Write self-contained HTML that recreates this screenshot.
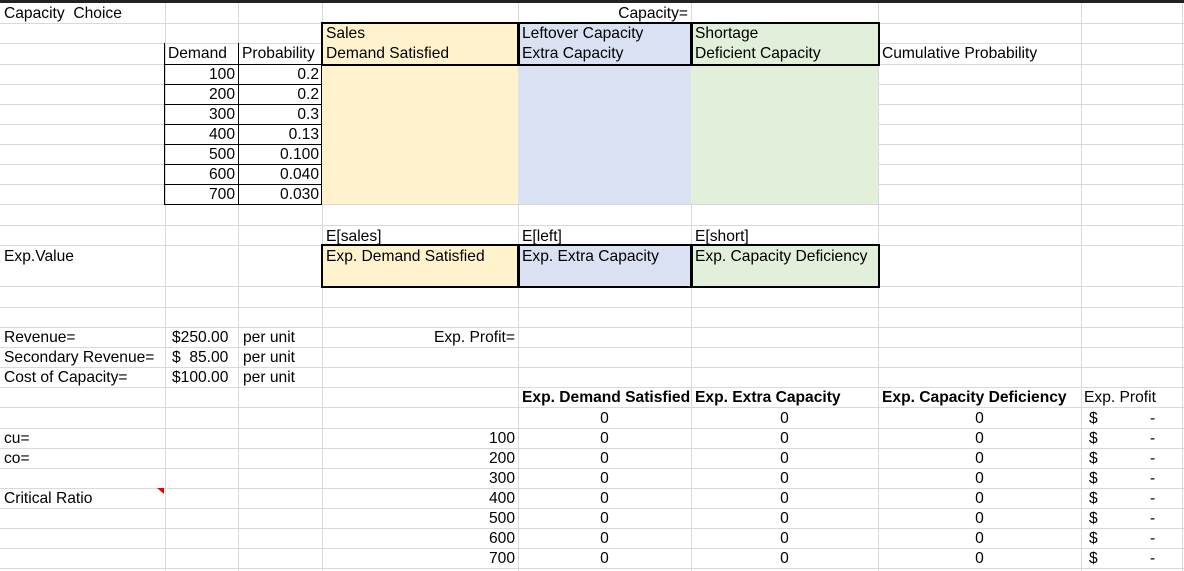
<!DOCTYPE html><html><head><style>
body{margin:0;width:1184px;height:571px;overflow:hidden;background:#fff;font-family:"Liberation Sans",Arial,sans-serif;font-size:15.6px;color:#000;position:relative}
.h{position:absolute;left:0;width:1184px;height:1px;background:#d9d9d9}
.v{position:absolute;top:0;height:571px;width:1px;background:#d9d9d9}
.f{position:absolute}
.t{position:absolute;height:20px;line-height:21px;white-space:nowrap;overflow:visible}
.r{text-align:right}.c{text-align:center}.b{font-weight:bold}
.bx{position:absolute;border:2px solid #000;box-sizing:border-box}
</style></head><body>
<div class="v" style="left:165px"></div><div class="v" style="left:238px"></div><div class="v" style="left:322px"></div><div class="v" style="left:518px"></div><div class="v" style="left:691px"></div><div class="v" style="left:878px"></div><div class="v" style="left:1081px"></div><div class="v" style="left:1182px"></div>
<div class="h" style="top:23px"></div><div class="h" style="top:43px"></div><div class="h" style="top:64px"></div><div class="h" style="top:84px"></div><div class="h" style="top:104px"></div><div class="h" style="top:124px"></div><div class="h" style="top:144px"></div><div class="h" style="top:164px"></div><div class="h" style="top:184px"></div><div class="h" style="top:204px"></div><div class="h" style="top:225px"></div><div class="h" style="top:245px"></div><div class="h" style="top:286px"></div><div class="h" style="top:307px"></div><div class="h" style="top:327px"></div><div class="h" style="top:347px"></div><div class="h" style="top:367px"></div><div class="h" style="top:387px"></div><div class="h" style="top:407px"></div><div class="h" style="top:428px"></div><div class="h" style="top:448px"></div><div class="h" style="top:468px"></div><div class="h" style="top:488px"></div><div class="h" style="top:508px"></div><div class="h" style="top:528px"></div><div class="h" style="top:548px"></div><div class="h" style="top:568px"></div>
<div class="f" style="left:0;top:0;width:1184px;height:3px;background:#222"></div>
<div class="f" style="left:322px;top:23px;width:196px;height:181px;background:#fff2cc"></div>
<div class="f" style="left:518px;top:23px;width:173px;height:181px;background:#d9e1f2"></div>
<div class="f" style="left:691px;top:23px;width:187px;height:181px;background:#e2efda"></div>
<div class="f" style="left:322px;top:245px;width:196px;height:41px;background:#fff2cc"></div>
<div class="f" style="left:518px;top:245px;width:173px;height:41px;background:#d9e1f2"></div>
<div class="f" style="left:691px;top:245px;width:187px;height:41px;background:#e2efda"></div>
<div class="bx" style="left:321px;top:22px;width:199px;height:44px"></div>
<div class="bx" style="left:517px;top:22px;width:176px;height:44px"></div>
<div class="bx" style="left:690px;top:22px;width:190px;height:44px"></div>
<div class="bx" style="left:321px;top:244px;width:199px;height:44px"></div>
<div class="bx" style="left:517px;top:244px;width:176px;height:44px"></div>
<div class="bx" style="left:690px;top:244px;width:190px;height:44px"></div>
<div class="f" style="left:164px;top:43px;width:1px;height:162px;background:#000"></div>
<div class="f" style="left:238px;top:43px;width:1px;height:162px;background:#000"></div>
<div class="f" style="left:164px;top:64px;width:158px;height:1px;background:#000"></div>
<div class="f" style="left:164px;top:84px;width:158px;height:1px;background:#000"></div>
<div class="f" style="left:164px;top:104px;width:158px;height:1px;background:#000"></div>
<div class="f" style="left:164px;top:124px;width:158px;height:1px;background:#000"></div>
<div class="f" style="left:164px;top:144px;width:158px;height:1px;background:#000"></div>
<div class="f" style="left:164px;top:164px;width:158px;height:1px;background:#000"></div>
<div class="f" style="left:164px;top:184px;width:158px;height:1px;background:#000"></div>
<div class="f" style="left:164px;top:204px;width:158px;height:1px;background:#000"></div>
<div class="f" style="left:321px;top:64px;width:1px;height:141px;background:#000"></div>
<div class="f" style="left:157px;top:488px;width:0;height:0;border-left:7px solid transparent;border-top:6px solid #e00"></div>
<div class="t" style="left:4px;top:3px">Capacity&nbsp; Choice</div>
<div class="t r" style="left:518px;top:3px;width:170px">Capacity=</div>
<div class="t" style="left:326px;top:23px">Sales</div>
<div class="t" style="left:522px;top:23px">Leftover Capacity</div>
<div class="t" style="left:695px;top:23px">Shortage</div>
<div class="t" style="left:168px;top:43px">Demand</div>
<div class="t" style="left:242px;top:43px">Probability</div>
<div class="t" style="left:326px;top:43px">Demand Satisfied</div>
<div class="t" style="left:522px;top:43px">Extra Capacity</div>
<div class="t" style="left:695px;top:43px">Deficient Capacity</div>
<div class="t" style="left:882px;top:43px">Cumulative Probability</div>
<div class="t r" style="left:165px;top:64px;width:70px">100</div><div class="t r" style="left:238px;top:64px;width:81px">0.2</div>
<div class="t r" style="left:165px;top:84px;width:70px">200</div><div class="t r" style="left:238px;top:84px;width:81px">0.2</div>
<div class="t r" style="left:165px;top:104px;width:70px">300</div><div class="t r" style="left:238px;top:104px;width:81px">0.3</div>
<div class="t r" style="left:165px;top:124px;width:70px">400</div><div class="t r" style="left:238px;top:124px;width:81px">0.13</div>
<div class="t r" style="left:165px;top:144px;width:70px">500</div><div class="t r" style="left:238px;top:144px;width:81px">0.100</div>
<div class="t r" style="left:165px;top:164px;width:70px">600</div><div class="t r" style="left:238px;top:164px;width:81px">0.040</div>
<div class="t r" style="left:165px;top:184px;width:70px">700</div><div class="t r" style="left:238px;top:184px;width:81px">0.030</div>
<div class="t" style="left:326px;top:226px">E[sales]</div>
<div class="t" style="left:522px;top:226px">E[left]</div>
<div class="t" style="left:695px;top:226px">E[short]</div>
<div class="t" style="left:4px;top:246px">Exp.Value</div>
<div class="t" style="left:326px;top:246px">Exp. Demand Satisfied</div>
<div class="t" style="left:522px;top:246px">Exp. Extra Capacity</div>
<div class="t" style="left:695px;top:246px">Exp. Capacity Deficiency</div>
<div class="t" style="left:4px;top:327px">Revenue=</div>
<div class="t" style="left:4px;top:347px">Secondary Revenue=</div>
<div class="t" style="left:4px;top:367px">Cost of Capacity=</div>
<div class="t" style="left:172px;top:327px">$250.00</div><div class="t" style="left:243px;top:327px">per unit</div>
<div class="t" style="left:172px;top:347px">$&nbsp; 85.00</div><div class="t" style="left:243px;top:347px">per unit</div>
<div class="t" style="left:172px;top:367px">$100.00</div><div class="t" style="left:243px;top:367px">per unit</div>
<div class="t r" style="left:322px;top:327px;width:193px">Exp. Profit=</div>
<div class="t b" style="left:522px;top:387px;width:168px;overflow:hidden">Exp. Demand Satisfied</div>
<div class="t b" style="left:695px;top:387px">Exp. Extra Capacity</div>
<div class="t b" style="left:882px;top:387px">Exp. Capacity Deficiency</div>
<div class="t" style="left:1084px;top:387px">Exp. Profit</div>
<div class="t" style="left:4px;top:428px">cu=</div>
<div class="t" style="left:4px;top:448px">co=</div>
<div class="t" style="left:4px;top:488px">Critical Ratio</div>
<div class="t r" style="left:322px;top:428px;width:193px">100</div>
<div class="t r" style="left:322px;top:448px;width:193px">200</div>
<div class="t r" style="left:322px;top:468px;width:193px">300</div>
<div class="t r" style="left:322px;top:488px;width:193px">400</div>
<div class="t r" style="left:322px;top:508px;width:193px">500</div>
<div class="t r" style="left:322px;top:528px;width:193px">600</div>
<div class="t r" style="left:322px;top:548px;width:193px">700</div>
<div style="position:absolute;left:0;top:407px">
<div class="t c" style="left:518px;top:1px;width:173px">0</div><div class="t c" style="left:691px;top:1px;width:187px">0</div><div class="t c" style="left:878px;top:1px;width:203px">0</div><div class="t" style="left:1089px;top:1px">$</div><div class="t" style="left:1150px;top:1px">-</div>
<div class="t c" style="left:518px;top:21px;width:173px">0</div><div class="t c" style="left:691px;top:21px;width:187px">0</div><div class="t c" style="left:878px;top:21px;width:203px">0</div><div class="t" style="left:1089px;top:21px">$</div><div class="t" style="left:1150px;top:21px">-</div>
<div class="t c" style="left:518px;top:41px;width:173px">0</div><div class="t c" style="left:691px;top:41px;width:187px">0</div><div class="t c" style="left:878px;top:41px;width:203px">0</div><div class="t" style="left:1089px;top:41px">$</div><div class="t" style="left:1150px;top:41px">-</div>
<div class="t c" style="left:518px;top:61px;width:173px">0</div><div class="t c" style="left:691px;top:61px;width:187px">0</div><div class="t c" style="left:878px;top:61px;width:203px">0</div><div class="t" style="left:1089px;top:61px">$</div><div class="t" style="left:1150px;top:61px">-</div>
<div class="t c" style="left:518px;top:81px;width:173px">0</div><div class="t c" style="left:691px;top:81px;width:187px">0</div><div class="t c" style="left:878px;top:81px;width:203px">0</div><div class="t" style="left:1089px;top:81px">$</div><div class="t" style="left:1150px;top:81px">-</div>
<div class="t c" style="left:518px;top:101px;width:173px">0</div><div class="t c" style="left:691px;top:101px;width:187px">0</div><div class="t c" style="left:878px;top:101px;width:203px">0</div><div class="t" style="left:1089px;top:101px">$</div><div class="t" style="left:1150px;top:101px">-</div>
<div class="t c" style="left:518px;top:121px;width:173px">0</div><div class="t c" style="left:691px;top:121px;width:187px">0</div><div class="t c" style="left:878px;top:121px;width:203px">0</div><div class="t" style="left:1089px;top:121px">$</div><div class="t" style="left:1150px;top:121px">-</div>
<div class="t c" style="left:518px;top:141px;width:173px">0</div><div class="t c" style="left:691px;top:141px;width:187px">0</div><div class="t c" style="left:878px;top:141px;width:203px">0</div><div class="t" style="left:1089px;top:141px">$</div><div class="t" style="left:1150px;top:141px">-</div>
</div>
</body></html>
